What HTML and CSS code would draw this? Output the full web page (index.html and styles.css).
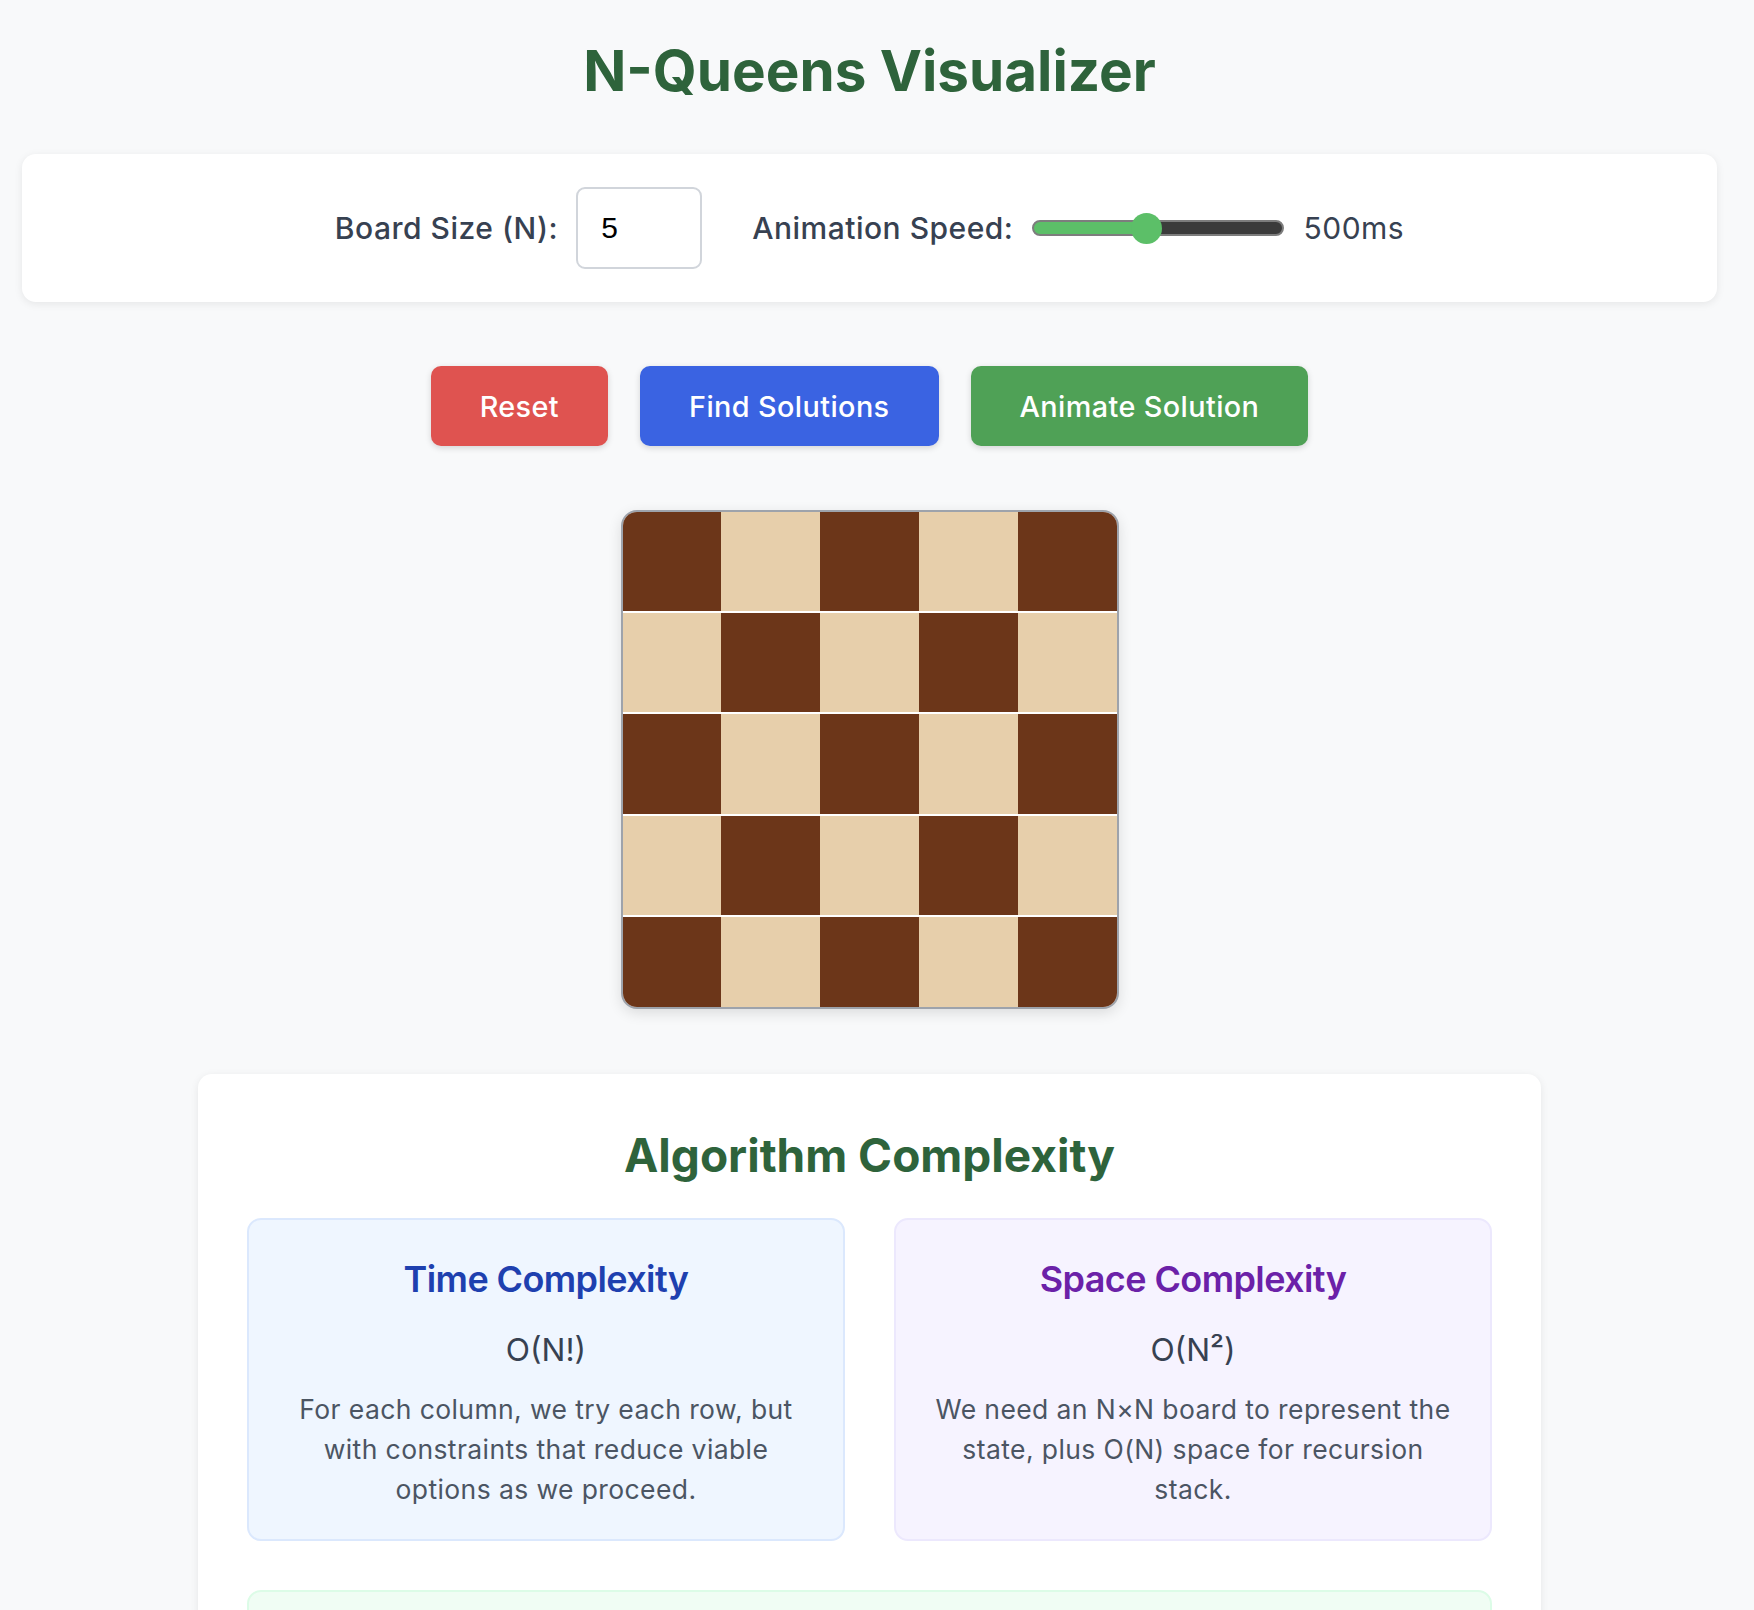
FILE: index.html
```html
<!DOCTYPE html>
<html lang="en">
<head>
<meta charset="UTF-8">
<title>N-Queens Visualizer</title>
<link rel="stylesheet" href="styles.css">
</head>
<body>
  <h1 class="page-title">N-Queens Visualizer</h1>

  <section class="controls">
    <div class="control-group control-group--size">
      <label class="control-label" for="board-size">Board Size (N):</label>
      <input class="size-input" id="board-size" type="number" min="4" max="12" value="5">
    </div>
    <div class="control-group control-group--speed">
      <label class="control-label" for="speed">Animation Speed:</label>
      <input class="speed-slider" id="speed" type="range" min="100" max="1000" step="100" value="500">
      <span class="speed-value">500ms</span>
    </div>
  </section>

  <div class="actions">
    <button class="btn btn--reset" type="button">Reset</button>
    <button class="btn btn--find" type="button">Find Solutions</button>
    <button class="btn btn--animate" type="button">Animate Solution</button>
  </div>

  <div class="board-wrap">
    <div class="board">
      <div class="cell dark"></div><div class="cell light"></div><div class="cell dark"></div><div class="cell light"></div><div class="cell dark"></div>
      <div class="cell light"></div><div class="cell dark"></div><div class="cell light"></div><div class="cell dark"></div><div class="cell light"></div>
      <div class="cell dark"></div><div class="cell light"></div><div class="cell dark"></div><div class="cell light"></div><div class="cell dark"></div>
      <div class="cell light"></div><div class="cell dark"></div><div class="cell light"></div><div class="cell dark"></div><div class="cell light"></div>
      <div class="cell dark"></div><div class="cell light"></div><div class="cell dark"></div><div class="cell light"></div><div class="cell dark"></div>
    </div>
  </div>

  <section class="complexity">
    <h2 class="complexity-title">Algorithm Complexity</h2>
    <div class="complexity-grid">
      <div class="cx-box cx-box--time">
        <h3 class="cx-heading">Time Complexity</h3>
        <div class="cx-value">O(N!)</div>
        <p class="cx-text">For each column, we try each row, but with constraints that reduce viable options as we proceed.</p>
      </div>
      <div class="cx-box cx-box--space">
        <h3 class="cx-heading">Space Complexity</h3>
        <div class="cx-value">O(N²)</div>
        <p class="cx-text">We need an N×N board to represent the state, plus O(N) space for recursion stack.</p>
      </div>
    </div>
    <div class="cx-box cx-box--approach">
      <h3 class="cx-heading">Backtracking Approach</h3>
      <p class="cx-text">Place a queen in each column, check that no other queen attacks it, and backtrack whenever a column has no safe row.</p>
    </div>
  </section>
</body>
</html>
```

FILE: styles.css
```css
html {
  overflow: hidden;
}

body {
  margin: 0;
  padding: 0 37px 40px 22px;
  background: #f8f9fa;
  font-family: Inter, "Noto Sans", sans-serif;
  color: #374151;
}

.page-title {
  margin: 36px 0 48px;
  font-size: 56.6px;
  line-height: 70px;
  font-weight: 700;
  color: #2e633b;
  text-align: center;
}

/* Controls card */
.controls {
  display: flex;
  justify-content: center;
  align-items: center;
  gap: 50px;
  padding: 33px 0;
  background: #ffffff;
  border-radius: 14px;
  box-shadow: 0 2px 8px rgba(0, 0, 0, 0.08);
}

.control-group {
  display: flex;
  align-items: center;
}

.control-group--size {
  gap: 18px;
}

.control-group--speed {
  gap: 19px;
}

.control-label {
  font-size: 30px;
  font-weight: 500;
  letter-spacing: 0.5px;
  color: #374151;
  line-height: 36px;
}

.size-input {
  box-sizing: border-box;
  width: 126px;
  height: 82px;
  margin: 0;
  padding: 0 23px;
  border: 2px solid #d1d5db;
  border-radius: 9px;
  background: #fff;
  font-family: "Liberation Sans", Arial, sans-serif;
  font-size: 30px;
  color: #000;
  -moz-appearance: textfield;
}

.size-input::-webkit-outer-spin-button,
.size-input::-webkit-inner-spin-button {
  -webkit-appearance: none;
  margin: 0;
}

.speed-slider {
  -webkit-appearance: none;
  appearance: none;
  box-sizing: border-box;
  width: 252px;
  height: 16px;
  margin: 0;
  border: 2px solid #7d7d7d;
  border-radius: 8px;
  background: linear-gradient(to right, #5cbf68 0 45%, #3b3b3b 45% 100%);
}

.speed-slider::-webkit-slider-thumb {
  -webkit-appearance: none;
  appearance: none;
  width: 31px;
  height: 31px;
  border: none;
  border-radius: 50%;
  background: #5cbf68;
}

.speed-value {
  font-size: 30px;
  letter-spacing: 0.5px;
  line-height: 36px;
  color: #374151;
}

/* Buttons */
.actions {
  display: flex;
  justify-content: center;
  gap: 32px;
  margin-top: 64px;
}

.btn {
  display: inline-flex;
  align-items: center;
  justify-content: center;
  height: 80px;
  padding: 0 49px;
  border: none;
  border-radius: 10px;
  font-family: Inter, "Noto Sans", sans-serif;
  font-size: 28.8px;
  font-weight: 500;
  letter-spacing: 0.4px;
  color: #ffffff;
  box-shadow: 0 2px 6px rgba(0, 0, 0, 0.15);
}

.btn--reset { background: #df5350; }
.btn--find { background: #3a63e2; }
.btn--animate { background: #4fa156; }

/* Board */
.board-wrap {
  display: flex;
  justify-content: center;
  margin-top: 64px;
}

.board {
  box-sizing: border-box;
  width: 498px;
  height: 499px;
  display: grid;
  grid-template-columns: repeat(5, 1fr);
  grid-auto-rows: 99.2px;
  row-gap: 2px;
  overflow: hidden;
  border: 2px solid #9ea3ab;
  border-radius: 16px;
  background: #ffffff;
  box-shadow: 0 4px 14px rgba(0, 0, 0, 0.12);
}

.cell.dark { background: #6c3619; }
.cell.light { background: #e7cfab; }

/* Complexity card */
.complexity {
  width: 1343px;
  box-sizing: border-box;
  margin: 65px auto 0;
  padding: 53px 49px 49px;
  background: #ffffff;
  border-radius: 14px;
  box-shadow: 0 2px 8px rgba(0, 0, 0, 0.08);
}

.complexity-title {
  margin: 0 0 35px;
  font-size: 46px;
  line-height: 56px;
  font-weight: 700;
  color: #2e633b;
  text-align: center;
}

.complexity-grid {
  display: grid;
  grid-template-columns: 1fr 1fr;
  gap: 49px;
  margin-bottom: 49px;
}

.cx-box {
  padding: 38px 34px 30px;
  border: 2px solid;
  border-radius: 14px;
  text-align: center;
}

.cx-box--time {
  background: #eff6ff;
  border-color: #dbe8fd;
}

.cx-box--space {
  background: #f6f3ff;
  border-color: #ece8fd;
}

.cx-box--approach {
  background: #f0fdf4;
  border-color: #dcfce7;
}

.cx-heading {
  margin: 0 0 30px;
  font-size: 36px;
  line-height: 43px;
  font-weight: 600;
  letter-spacing: -0.6px;
}

.cx-box--time .cx-heading { color: #1e40af; }
.cx-box--space .cx-heading { color: #6b21a8; }
.cx-box--approach .cx-heading { color: #166534; }

.cx-value {
  margin: 0 0 20px;
  font-size: 31.7px;
  line-height: 38px;
  color: #374151;
}

.cx-text {
  margin: 0;
  font-size: 26.5px;
  letter-spacing: 0.4px;
  line-height: 40px;
  color: #4b5563;
}
```
